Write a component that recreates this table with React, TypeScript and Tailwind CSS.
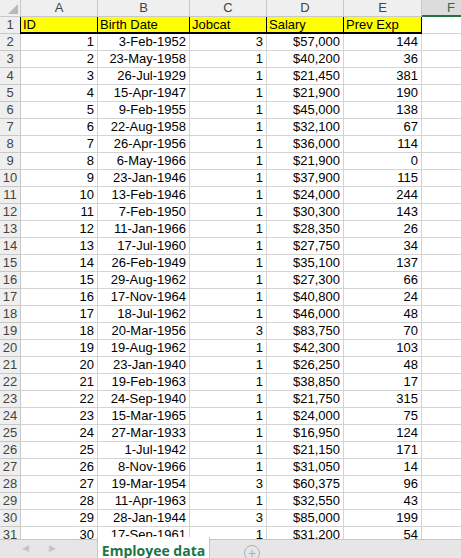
import React from "react";

const rows: [number, string, number, string, number][] = [
  [1, "3-Feb-1952", 3, "$57,000", 144],
  [2, "23-May-1958", 1, "$40,200", 36],
  [3, "26-Jul-1929", 1, "$21,450", 381],
  [4, "15-Apr-1947", 1, "$21,900", 190],
  [5, "9-Feb-1955", 1, "$45,000", 138],
  [6, "22-Aug-1958", 1, "$32,100", 67],
  [7, "26-Apr-1956", 1, "$36,000", 114],
  [8, "6-May-1966", 1, "$21,900", 0],
  [9, "23-Jan-1946", 1, "$37,900", 115],
  [10, "13-Feb-1946", 1, "$24,000", 244],
  [11, "7-Feb-1950", 1, "$30,300", 143],
  [12, "11-Jan-1966", 1, "$28,350", 26],
  [13, "17-Jul-1960", 1, "$27,750", 34],
  [14, "26-Feb-1949", 1, "$35,100", 137],
  [15, "29-Aug-1962", 1, "$27,300", 66],
  [16, "17-Nov-1964", 1, "$40,800", 24],
  [17, "18-Jul-1962", 1, "$46,000", 48],
  [18, "20-Mar-1956", 3, "$83,750", 70],
  [19, "19-Aug-1962", 1, "$42,300", 103],
  [20, "23-Jan-1940", 1, "$26,250", 48],
  [21, "19-Feb-1963", 1, "$38,850", 17],
  [22, "24-Sep-1940", 1, "$21,750", 315],
  [23, "15-Mar-1965", 1, "$24,000", 75],
  [24, "27-Mar-1933", 1, "$16,950", 124],
  [25, "1-Jul-1942", 1, "$21,150", 171],
  [26, "8-Nov-1966", 1, "$31,050", 14],
  [27, "19-Mar-1954", 3, "$60,375", 96],
  [28, "11-Apr-1963", 1, "$32,550", 43],
  [29, "28-Jan-1944", 3, "$85,000", 199],
  [30, "17-Sep-1961", 1, "$31,200", 54],
];

const widths = ["w-[77px]", "w-[92px]", "w-[77px]", "w-[77px]", "w-[78px]"];
const letters = ["A", "B", "C", "D", "E"];

function RowHead({ n }: { n: number }) {
  return (
    <div className="w-[21px] shrink-0 h-full bg-[#efefef] border-r border-b border-[#c8c8c8] text-[#444] text-center leading-[16px]">
      {n}
    </div>
  );
}

export default function App() {
  return (
    <div
      className="w-[461px] h-[558px] overflow-hidden bg-white flex flex-col text-[13px] text-black"
      style={{ fontFamily: '"Liberation Sans", Arial, sans-serif' }}
    >
      <div className="flex-1 overflow-hidden">
        {/* column headers */}
        <div className="flex h-[17px]">
          <div className="w-[21px] shrink-0 bg-[#efefef] border-r border-b border-[#c8c8c8] flex items-end justify-end p-[2px]">
            <div className="w-0 h-0 border-l-[10px] border-l-transparent border-b-[10px] border-b-[#b8b8b8]" />
          </div>
          {letters.map((l, i) => (
            <div
              key={l}
              className={`${widths[i]} shrink-0 bg-[#efefef] border-r border-b border-[#c8c8c8] text-[#444] text-center leading-[16px]`}
            >
              {l}
            </div>
          ))}
          <div className="flex-1 bg-[#dcdcdc] border-b-2 border-[#217346] text-[#217346] text-right pr-[6px] leading-[15px]">
            F
          </div>
        </div>

        {/* header row */}
        <div className="flex h-[17px]">
          <RowHead n={1} />
          <div className="flex -ml-px border-l border-b-2 border-black h-[17px]">
            {["ID", "Birth Date", "Jobcat", "Salary", "Prev Exp"].map((t, i) => (
              <div
                key={t}
                className={`${widths[i]} shrink-0 bg-[#ffff00] border-r border-black pl-[2px] leading-[15px]`}
              >
                {t}
              </div>
            ))}
          </div>
          <div className="flex-1 border-b border-[#d4d4d4]" />
        </div>

        {rows.map((r, idx) => (
          <div key={idx} className="flex h-[17px]">
            <RowHead n={idx + 2} />
            {r.map((v, i) => (
              <div
                key={i}
                className={`${widths[i]} shrink-0 border-r border-b border-[#d4d4d4] text-right pr-[3px] leading-[16px]`}
              >
                {v}
              </div>
            ))}
            <div className="flex-1 border-b border-[#d4d4d4]" />
          </div>
        ))}
      </div>

      {/* sheet tab bar */}
      <div className="h-[19px] shrink-0 flex bg-[#e6e6e6] border-t border-[#c6c6c6]">
        <div className="w-[97px] flex items-center gap-[20px] pl-[22px] text-[#c4c4c4] text-[9px]">
          <span>◀</span>
          <span>▶</span>
        </div>
        <div className="w-[113px] bg-white border-l border-r border-[#c6c6c6] -mt-[3px] flex justify-center">
          <span
            className="text-[#217346] font-bold text-[14px] leading-[18px] pt-[5px]"
            style={{ fontFamily: '"Open Sans", "Liberation Sans", sans-serif' }}
          >
            Employee data
          </span>
        </div>
        <div className="w-[34px]" />
        <div className="mt-[5px] w-[16px] h-[16px] rounded-full border border-[#b0b0b0] flex items-center justify-center text-[#b0b0b0] text-[14px] leading-none">
          +
        </div>
      </div>
    </div>
  );
}
